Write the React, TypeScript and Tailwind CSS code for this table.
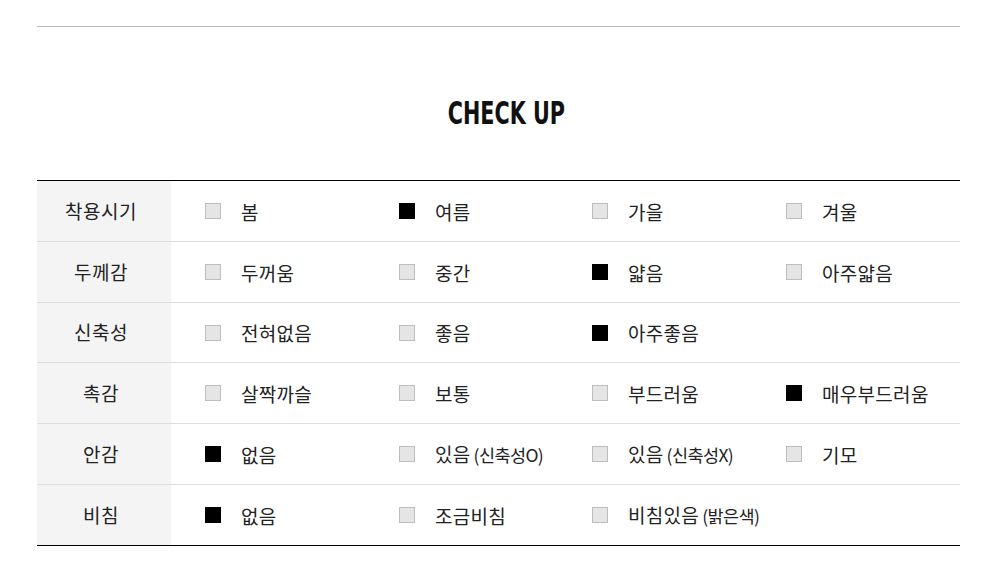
import React from "react";

type Item = { label: string; sub?: string; checked?: boolean };
type Row = { title: string; items: Item[] };

const rows: Row[] = [
  { title: "착용시기", items: [{ label: "봄" }, { label: "여름", checked: true }, { label: "가을" }, { label: "겨울" }] },
  { title: "두께감", items: [{ label: "두꺼움" }, { label: "중간" }, { label: "얇음", checked: true }, { label: "아주얇음" }] },
  { title: "신축성", items: [{ label: "전혀없음" }, { label: "좋음" }, { label: "아주좋음", checked: true }] },
  { title: "촉감", items: [{ label: "살짝까슬" }, { label: "보통" }, { label: "부드러움" }, { label: "매우부드러움", checked: true }] },
  { title: "안감", items: [{ label: "없음", checked: true }, { label: "있음", sub: "(신축성O)" }, { label: "있음", sub: "(신축성X)" }, { label: "기모" }] },
  { title: "비침", items: [{ label: "없음", checked: true }, { label: "조금비침" }, { label: "비침있음", sub: "(밝은색)" }] },
];

const rowHeights = ["h-[61px]", "h-[61px]", "h-[60px]", "h-[61px]", "h-[61px]", "h-[60px]"];

export default function App() {
  return (
    <div className="w-[1000px] h-[576px] bg-white pl-[37px] pt-[26px] text-[#222]" style={{ fontFamily: '"Noto Sans CJK KR", "Noto Sans", sans-serif' }}>
      <div className="w-[923px]">
        <div className="border-t border-[#bbbbbb]" />
        <div className="h-[153px] flex items-center justify-center pl-[15px] pt-[18px]">
          <h2
            className="text-[32px] font-bold text-[#111] scale-x-[0.72] leading-none"
            style={{ fontFamily: '"DejaVu Sans Condensed", "DejaVu Sans", sans-serif' }}
          >
            CHECK UP
          </h2>
        </div>
        <div className="border-t border-b border-black">
          {rows.map((r, i) => (
            <div key={i} className={`flex ${rowHeights[i]} ${i < rows.length - 1 ? "border-b border-[#dddddd]" : ""}`}>
              <div className="w-[134px] shrink-0 bg-[#f4f4f4] flex items-center justify-center pr-[6px] text-[19px] tracking-[0.5px]">{r.title}</div>
              <div className="flex-1 grid grid-cols-[194px_193px_194px_1fr] items-center pl-[34px]">
                {r.items.map((it, j) => (
                  <div key={j} className="flex items-center">
                    <span
                      className={`w-[16px] h-[16px] shrink-0 ${it.checked ? "bg-black" : "bg-[#e5e5e5] border border-[#bdbdbd]"}`}
                    />
                    <span className="ml-[20px] text-[19px] leading-none flex items-baseline tracking-[0.3px]">
                      {it.label}
                      {it.sub && <span className="ml-[3px] text-[17.5px] tracking-[-0.6px]">{it.sub}</span>}
                    </span>
                  </div>
                ))}
              </div>
            </div>
          ))}
        </div>
      </div>
    </div>
  );
}
